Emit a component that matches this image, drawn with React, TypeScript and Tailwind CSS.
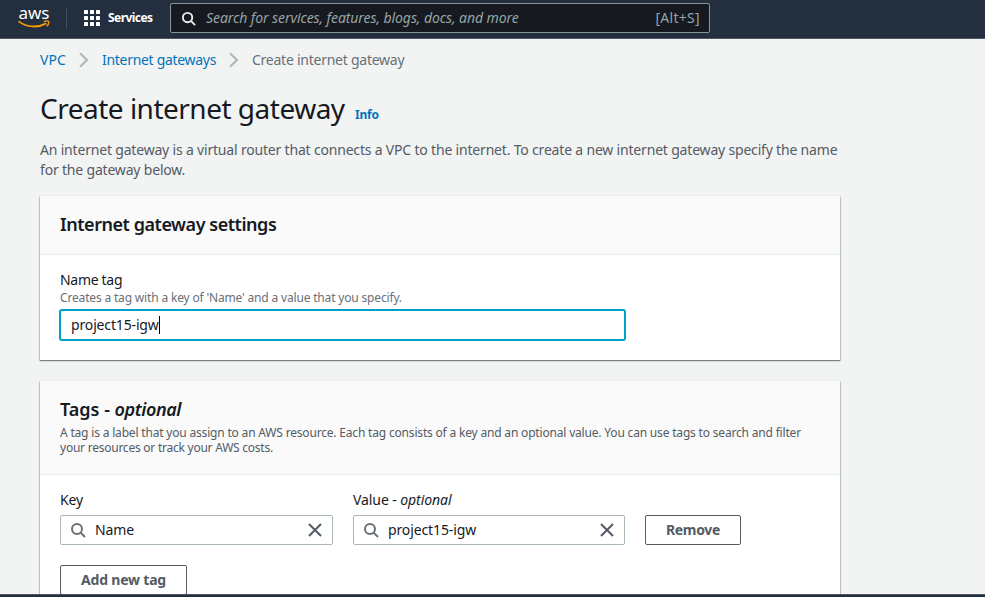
import type { ReactNode } from 'react';

function SearchIcon({ className }: { className: string }) {
  return (
    <svg viewBox="0 0 16 16" className={className} fill="none" stroke="currentColor" strokeWidth="2">
      <circle cx="7" cy="7" r="5" />
      <path d="M10.6 10.6 15 15" />
    </svg>
  );
}

function AwsLogo() {
  return (
    <div className="flex h-[22px] w-[32px] shrink-0 flex-col items-center">
      <span className="h-[13px] text-[17px] leading-[12px] font-normal text-white">aws</span>
      <svg viewBox="0 0 32 9" className="h-[9px] w-[32px] shrink-0" fill="none" stroke="#ff9900">
        <path d="M.6 1.400C9 7.600 20 8 28.300 3.400" strokeWidth="1.800" />
        <path d="M25.600 1.500c2-.7 4.500-.9 5 0 .4 1-.5 3.400-1.800 4.800" strokeWidth="1.300" />
      </svg>
    </div>
  );
}

function ServicesGrid() {
  return (
    <div className="grid grid-cols-3 gap-[2px]">
      {Array.from({ length: 9 }, (_, i) => (
        <span key={i} className="h-[4px] w-[4px] rounded-[0.5px] bg-white" />
      ))}
    </div>
  );
}

function Chevron() {
  return (
    <svg viewBox="0 0 10 16" className="h-[16px] w-[10px] shrink-0" fill="none" stroke="#aab7b8" strokeWidth="2">
      <path d="M1 1.200 8 8 1 14.800" />
    </svg>
  );
}

function TopBar() {
  return (
    <header className="flex h-[39px] shrink-0 items-start border-b border-[#4b5563] bg-[#232f3e] pl-[18px]">
      <div className="flex h-[36px] items-center">
        <AwsLogo />
        <div className="ml-[16px] h-[22px] w-px bg-[#414d5c]" />
        <div className="ml-[17px] flex items-center gap-[8px]">
          <ServicesGrid />
          <span className="w-[46px] text-[12px] leading-[16px] font-bold tracking-[-0.55px] whitespace-nowrap text-white">Services</span>
        </div>
      </div>
      <div className="mt-[3px] ml-[16px] flex h-[30px] w-[540px] items-center rounded-[2px] border border-[#879596] bg-[#16191f] pr-[9px] pl-[10px]">
        <SearchIcon className="h-[15px] w-[15px] text-[#eaeded]" />
        <span className="ml-[10px] text-[14px] leading-[20px] tracking-[-0.08px] text-[#95a5a6] italic">Search for services, features, blogs, docs, and more</span>
        <span className="ml-auto text-[14px] tracking-[0.3px] text-[#95a5a6]">[Alt+S]</span>
      </div>
    </header>
  );
}

function Panel({ header, children }: { header: ReactNode; children: ReactNode }) {
  return (
    <section className="w-[800px] bg-white shadow-[0_1px_1px_0_rgba(0,28,36,0.3),1px_1px_1px_0_rgba(0,28,36,0.15),-1px_1px_1px_0_rgba(0,28,36,0.15),0_0_0_1px_#eaeded]">
      <div className="border-b border-[#eaeded] bg-[#fafafa] px-[20px]">{header}</div>
      <div className="px-[20px]">{children}</div>
    </section>
  );
}

function TokenInput({ value, className }: { value: string; className: string }) {
  return (
    <div className={`flex h-[30px] items-center rounded-[2px] border border-[#aab7b8] pr-[9px] pl-[9px] ${className}`}>
      <SearchIcon className="h-[16px] w-[16px] text-[#687078]" />
      <span className="ml-[9px] text-[14px] tracking-[-0.12px]">{value}</span>
      <svg viewBox="0 0 16 16" className="ml-auto h-[16px] w-[16px]" stroke="#545b64" strokeWidth="2">
        <path d="M2 2 14 14M14 2 2 14" />
      </svg>
    </div>
  );
}

export default function App() {
  return (
    <div className="flex h-[597px] w-[985px] flex-col overflow-hidden bg-[#f2f3f3] font-['Noto_Sans',sans-serif] text-[14px] leading-[20px] text-[#16191f]">
      <TopBar />
      <main className="min-h-0 flex-1 overflow-hidden px-[40px] pt-[11px]">
        <nav className="flex items-center text-[14px] whitespace-nowrap text-[#0073bb]">
          <a className="w-[39px] tracking-[0.05px]">VPC</a>
          <Chevron />
          <a className="ml-[13px] w-[127px] tracking-[-0.3px]">Internet gateways</a>
          <Chevron />
          <span className="ml-[13px] tracking-[-0.25px] text-[#687078]">Create internet gateway</span>
        </nav>
        <div className="mt-[20px] flex h-[36px] items-baseline whitespace-nowrap">
          <h1 className="w-[315px] text-[28px] leading-[36px] tracking-[-0.5px]">Create internet gateway</h1>
          <a className="text-[12px] font-bold tracking-[-0.2px] text-[#0073bb]">Info</a>
        </div>
        <p className="mt-[14px] tracking-[-0.186px] whitespace-nowrap text-[#545b64]">
          An internet gateway is a virtual router that connects a VPC to the internet. To create a new internet gateway specify the name
          <br />
          for the gateway below.
        </p>
        <div className="mt-[16px] flex flex-col gap-[21px]">
          <Panel header={<h2 className="pt-[17px] pb-[19px] text-[18px] leading-[22px] font-semibold tracking-[-0.46px]">Internet gateway settings</h2>}>
            <div className="h-[105px] pt-[15px]">
              <label className="block tracking-[-0.3px]">Name tag</label>
              <p className="text-[12px] leading-[16px] tracking-[-0.168px] text-[#687078]">Creates a tag with a key of 'Name' and a value that you specify.</p>
              <div className="mt-[3px] -ml-px flex h-[32px] w-[567px] items-center rounded-[3px] border-2 border-[#00a1c9] pl-[10px]">
                <span className="tracking-[-0.15px]">project15-igw</span>
                <span className="h-[18px] w-px bg-black" />
              </div>
            </div>
          </Panel>
          <Panel
            header={
              <div className="h-[93px] pt-[17px]">
                <h2 className="text-[18px] leading-[22px] font-semibold">
                  Tags - <em className="tracking-[-0.4px]">optional</em>
                </h2>
                <p className="mt-[5px] text-[12px] leading-[15px] tracking-[-0.182px] whitespace-nowrap text-[#545b64]">
                  A tag is a label that you assign to an AWS resource. Each tag consists of a key and an optional value. You can use tags to search and filter
                  <br />
                  <span className="tracking-[-0.24px]">your resources or track your AWS costs.</span>
                </p>
              </div>
            }
          >
            <div className="pt-[15px]">
              <div className="flex items-end gap-[20px]">
                <div className="w-[273px]">
                  <label className="mb-[5px] block tracking-[-0.1px]">Key</label>
                  <TokenInput value="Name" className="w-[273px]" />
                </div>
                <div className="w-[272px]">
                  <label className="mb-[5px] block tracking-[-0.08px]">
                    Value - <em>optional</em>
                  </label>
                  <TokenInput value="project15-igw" className="w-[272px]" />
                </div>
                <button className="h-[30px] w-[96px] rounded-[2px] border border-[#545b64] font-bold tracking-[-0.35px] text-[#545b64]">Remove</button>
              </div>
              <button className="mt-[20px] h-[30px] w-[127px] rounded-[2px] border border-[#545b64] font-bold tracking-[-0.2px] text-[#545b64]">Add new tag</button>
            </div>
          </Panel>
        </div>
      </main>
      <footer className="h-[3px] shrink-0 border-t border-[#4b5563] bg-[#232f3e]" />
    </div>
  );
}
